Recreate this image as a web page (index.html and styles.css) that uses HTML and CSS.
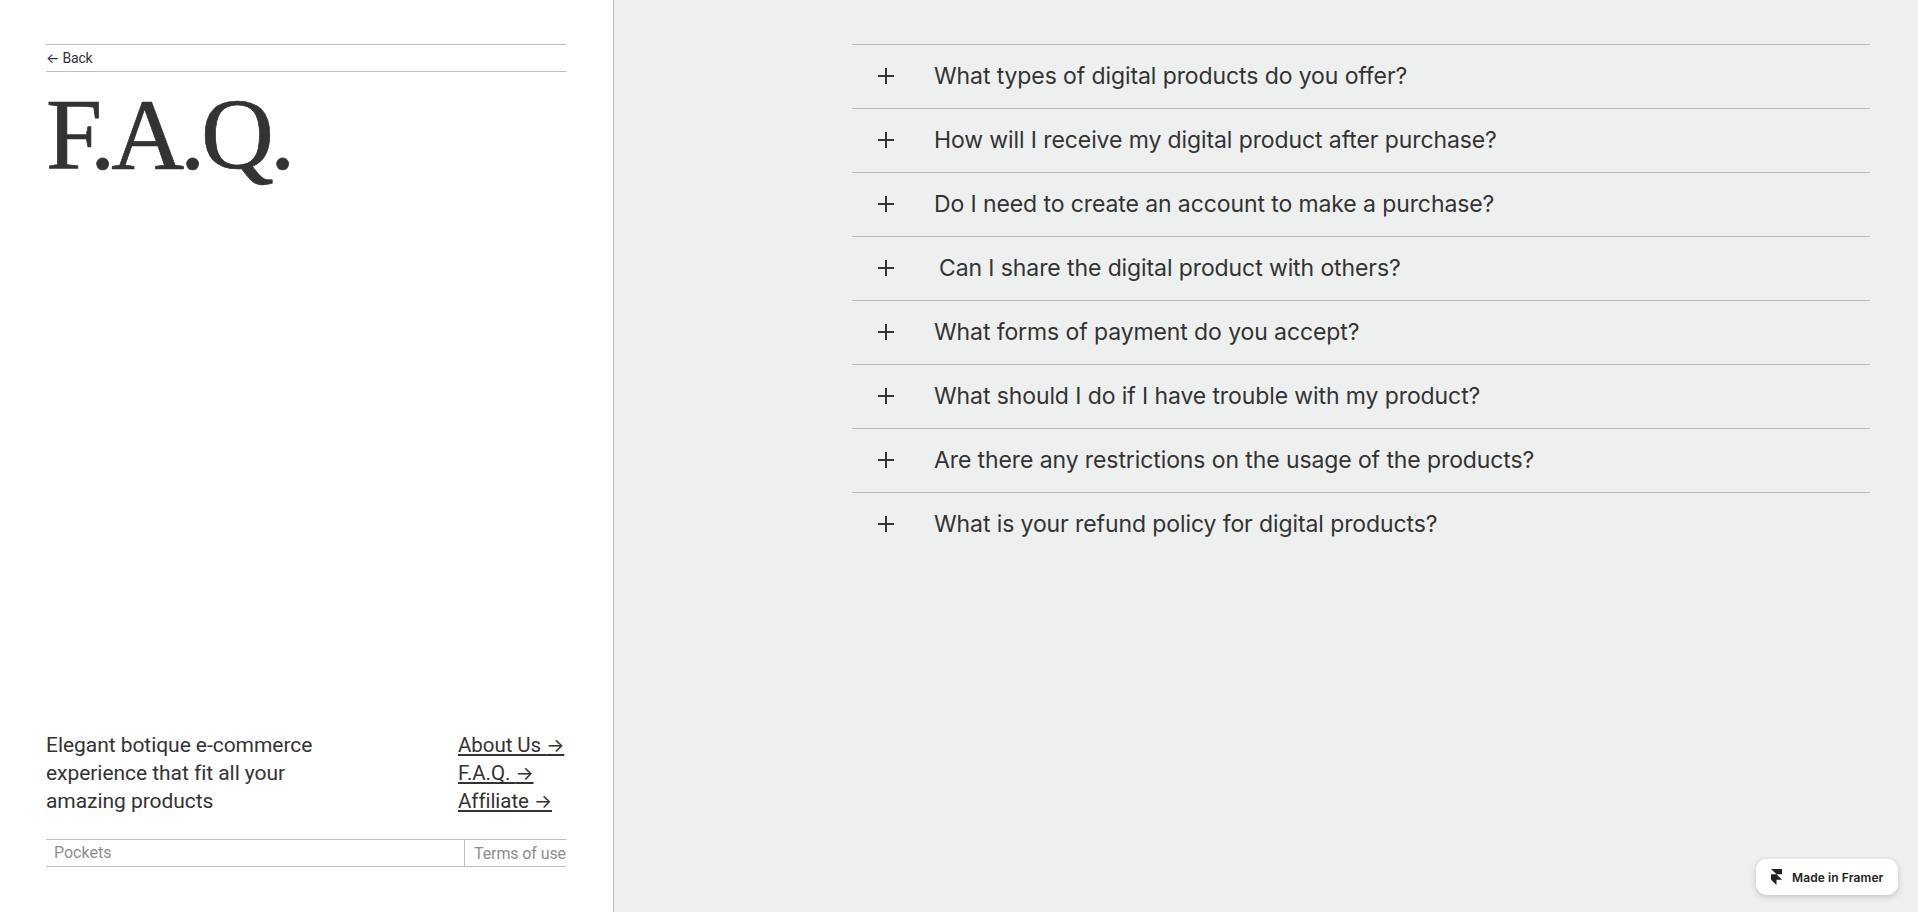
FILE: index.html
```html
<!DOCTYPE html>
<html lang="en">
<head>
  <meta charset="UTF-8" />
  <meta name="viewport" content="width=device-width, initial-scale=1" />
  <title>F.A.Q.</title>
  <link rel="stylesheet" href="styles.css">
</head>
<body>
  <aside class="side">
    <div class="side-top">
      <a class="back" href="#"><span class="arrow">←</span> Back</a>
      <h1>F.A.Q.</h1>
    </div>
    <div class="side-bottom">
      <div class="about">
        <p>Elegant botique e-commerce<br>experience that fit all your<br>amazing products</p>
        <nav class="links">
          <a href="#">About Us <span class="arrow">→</span></a>
          <a href="#">F.A.Q. <span class="arrow">→</span></a>
          <a href="#">Affiliate <span class="arrow">→</span></a>
        </nav>
      </div>
      <div class="foot">
        <span class="brand">Pockets</span>
        <a class="terms" href="#">Terms of use</a>
      </div>
    </div>
  </aside>

  <main class="content">
    <ul class="faq">
      <li><span class="plus"></span><span class="q">What types of digital products do you offer?</span></li>
      <li><span class="plus"></span><span class="q">How will I receive my digital product after purchase?</span></li>
      <li><span class="plus"></span><span class="q">Do I need to create an account to make a purchase?</span></li>
      <li><span class="plus"></span><span class="q indent">Can I share the digital product with others?</span></li>
      <li><span class="plus"></span><span class="q">What forms of payment do you accept?</span></li>
      <li><span class="plus"></span><span class="q">What should I do if I have trouble with my product?</span></li>
      <li><span class="plus"></span><span class="q">Are there any restrictions on the usage of the products?</span></li>
      <li><span class="plus"></span><span class="q">What is your refund policy for digital products?</span></li>
    </ul>
  </main>

  <a class="framer" href="#">
    <svg width="11" height="16" viewBox="0 0 11 16"><path d="M0 0h11v5.3H5.5zM0 5.3h5.5L11 10.7H5.5V16L0 10.7z" fill="#222"/></svg>
    Made in Framer
  </a>
</body>
</html>
```

FILE: styles.css
```css
* {
  box-sizing: border-box;
}

html, body {
  height: 100%;
}

body {
  margin: 0;
  display: flex;
  height: 912px;
  overflow: hidden;
  background: #eef0ef;
  color: #333;
  font-family: 'Roboto', sans-serif;
}

a {
  color: inherit;
}

.arrow {
  font-family: 'Inter', sans-serif;
}

.side {
  width: 614px;
  flex-shrink: 0;
  padding: 44px 47px 45px 46px;
  background: #fff;
  border-right: 1px solid #bdbdbd;
  display: flex;
  flex-direction: column;
  justify-content: space-between;
}

.back {
  display: block;
  height: 28px;
  border-top: 1px solid #bdbdbd;
  border-bottom: 1px solid #bdbdbd;
  font-size: 14px;
  line-height: 26px;
  text-decoration: none;
  letter-spacing: -0.2px;
}

h1 {
  margin: 11px 0 0;
  font-family: 'Liberation Serif', serif;
  font-weight: 400;
  font-size: 101px;
  line-height: 104px;
  letter-spacing: -4.1px;
  -webkit-text-stroke: 0.7px #333;
}

.about {
  display: flex;
  justify-content: space-between;
  font-size: 21px;
  line-height: 28px;
  letter-spacing: -0.05px;
  white-space: nowrap;
}

.about p {
  margin: 0;
}

.links {
  width: 108px;
  font-size: 20.5px;
}

.links a {
  display: block;
  width: fit-content;
  height: 28px;
}

.links .arrow {
  font-size: 19px;
  line-height: 1;
}

.foot {
  display: flex;
  height: 28px;
  margin-top: 24px;
  border-top: 1px solid #bdbdbd;
  border-bottom: 1px solid #bdbdbd;
  color: #8d8d8d;
  font-size: 16px;
  line-height: 25px;
}

.brand {
  flex: 1;
  padding-left: 8px;
}

.terms {
  width: 102px;
  padding-left: 9px;
  border-left: 1px solid #bdbdbd;
  line-height: 27px;
  text-decoration: none;
  white-space: nowrap;
  letter-spacing: -0.1px;
}

.content {
  flex: 1;
  padding: 44px 48px 0 238px;
}

.faq {
  margin: 0;
  padding: 0;
  list-style: none;
}

.faq li {
  display: flex;
  align-items: center;
  height: 64px;
  border-top: 1px solid #bdbdbd;
  padding-left: 26px;
  padding-bottom: 2px;
  color: #333;
}

.plus {
  position: relative;
  width: 16px;
  height: 16px;
  margin-right: 40px;
  flex-shrink: 0;
}

.plus::before,
.plus::after {
  content: "";
  position: absolute;
  background: #333;
}

.plus::before {
  left: 0;
  right: 0;
  top: 7px;
  height: 2px;
}

.plus::after {
  top: 0;
  bottom: 0;
  left: 7px;
  width: 2px;
}

.q {
  font-family: 'Inter', sans-serif;
  font-size: 23px;
  letter-spacing: -0.1px;
}

.indent {
  margin-left: 5px;
}

.framer {
  position: absolute;
  right: 20px;
  bottom: 17px;
  display: flex;
  align-items: center;
  gap: 10px;
  width: 142px;
  height: 36px;
  padding-left: 15px;
  background: #fff;
  border-radius: 11px;
  box-shadow: 0 2px 6px rgba(0, 0, 0, 0.18);
  color: #222;
  font-family: 'Inter', sans-serif;
  font-size: 12px;
  font-weight: 600;
  letter-spacing: 0.1px;
  text-decoration: none;
  white-space: nowrap;
}
```
